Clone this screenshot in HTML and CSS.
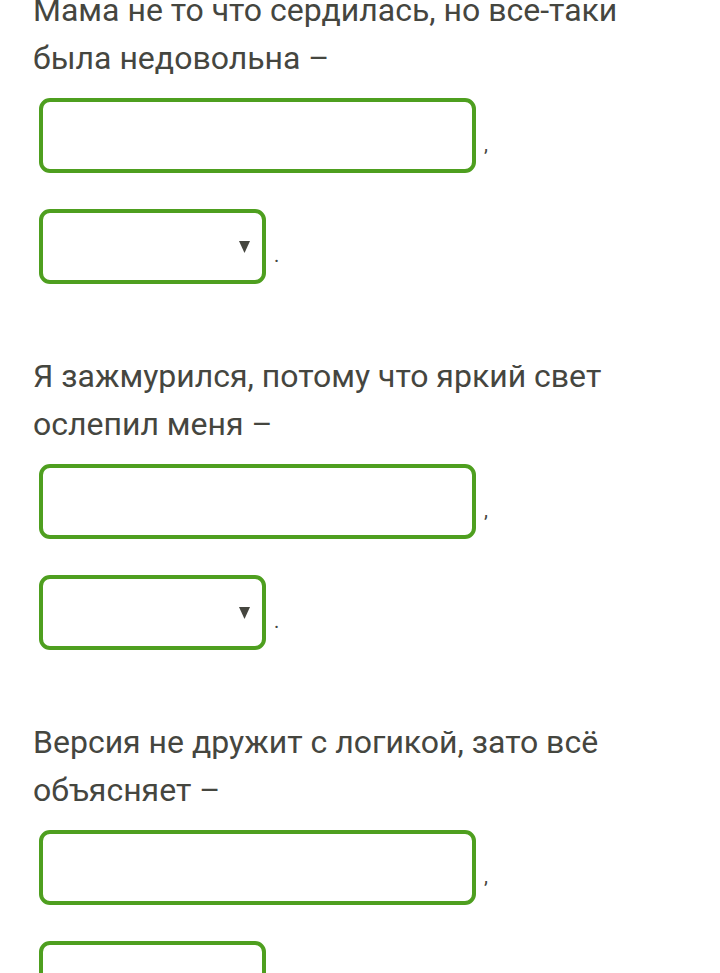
FILE: index.html
```html
<!DOCTYPE html>
<html lang="ru">
<head>
<meta charset="utf-8">
<link rel="stylesheet" href="styles.css">
</head>
<body>
<main class="page">
  <section class="task">
    <p class="sentence">Мама не то что сердилась, но все-таки была недовольна –</p>
    <div class="row">
      <input class="field" type="text" aria-label="ответ"><span class="punct">,</span>
    </div>
    <div class="row row-select">
      <div class="select"><svg class="arrow" viewBox="0 0 11 12" width="11" height="12"><path d="M0 0 H11 L5.5 12 Z"/></svg></div><span class="punct">.</span>
    </div>
  </section>
  <section class="task">
    <p class="sentence">Я зажмурился, потому что яркий свет ослепил меня –</p>
    <div class="row">
      <input class="field" type="text" aria-label="ответ"><span class="punct">,</span>
    </div>
    <div class="row row-select">
      <div class="select"><svg class="arrow" viewBox="0 0 11 12" width="11" height="12"><path d="M0 0 H11 L5.5 12 Z"/></svg></div><span class="punct">.</span>
    </div>
  </section>
  <section class="task">
    <p class="sentence">Версия не дружит с логикой, зато всё объясняет –</p>
    <div class="row">
      <input class="field" type="text" aria-label="ответ"><span class="punct">,</span>
    </div>
    <div class="row row-select">
      <div class="select"><svg class="arrow" viewBox="0 0 11 12" width="11" height="12"><path d="M0 0 H11 L5.5 12 Z"/></svg></div><span class="punct">.</span>
    </div>
  </section>
</main>
</body>
</html>
```
FILE: styles.css
```css
html, body {
  margin: 0;
  padding: 0;
  background: #ffffff;
}
body {
  font-family: Roboto, "Noto Sans", "DejaVu Sans", sans-serif;
  color: #45463f;
  overflow: hidden;
}
.page {
  margin-top: -14px;
  padding: 0 20px 0 33px;
  display: flex;
  flex-direction: column;
  gap: 68px;
}
.task {
  display: flex;
  flex-direction: column;
}
.sentence {
  margin: 0;
  font-size: 32px;
  line-height: 48px;
  max-width: 590px;
}
.row {
  margin-top: 16px;
  display: flex;
  align-items: center;
  padding-left: 6px;
}
.row-select {
  margin-top: 36px;
}
.field {
  box-sizing: border-box;
  width: 437px;
  height: 75px;
  margin: 0;
  padding: 0;
  border: 4px solid #4e9f1f;
  border-radius: 11px;
  background: #fff;
  outline: none;
  font: inherit;
}
.select {
  box-sizing: border-box;
  width: 227px;
  height: 75px;
  border: 4px solid #4e9f1f;
  border-radius: 11px;
  display: flex;
  align-items: center;
  justify-content: flex-end;
  padding-right: 12px;
}
.arrow {
  display: block;
  fill: #45463f;
}
.punct {
  font-size: 20px;
  margin-left: 8px;
  padding-top: 16px;
}
```
